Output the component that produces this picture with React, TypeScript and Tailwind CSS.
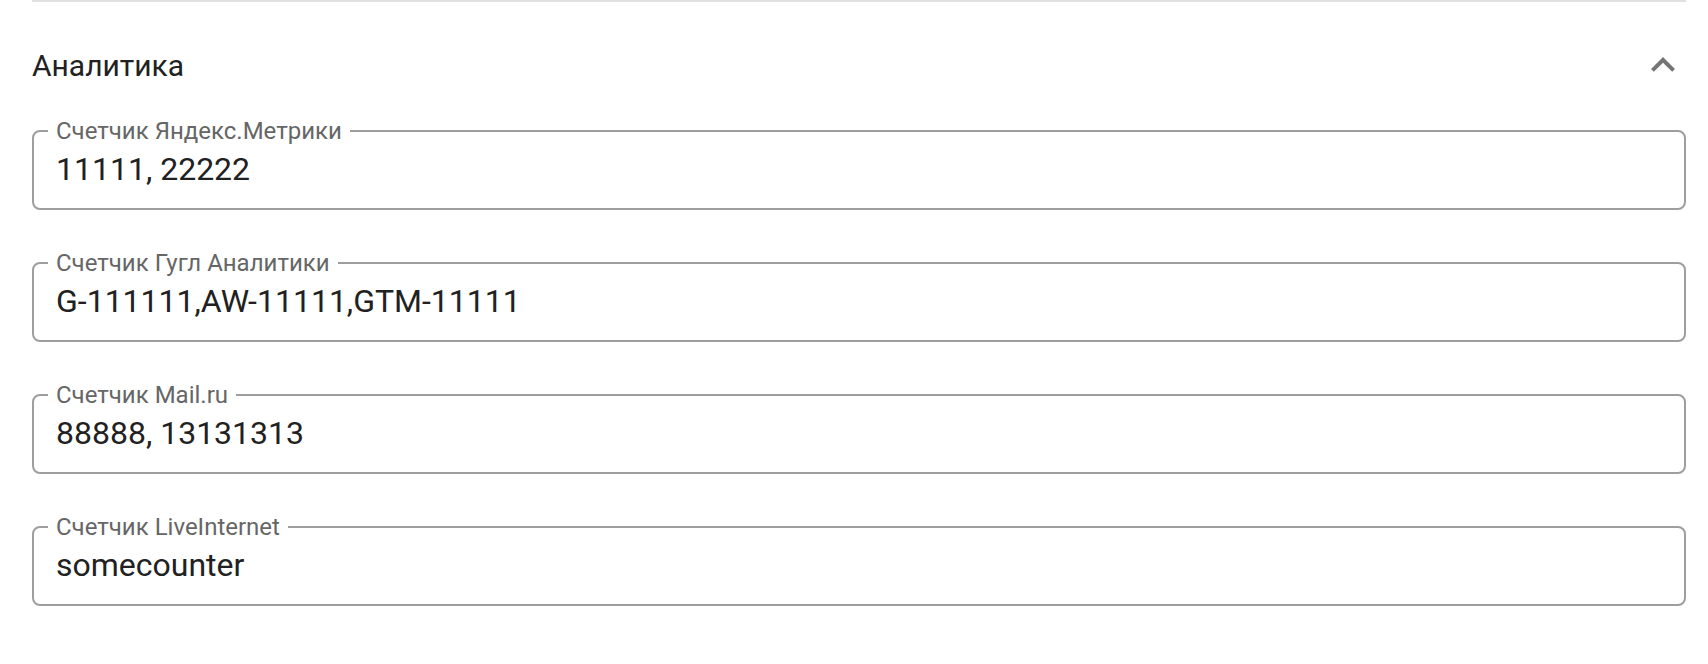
import React from "react";

type Counter = { label: string; value: string };

const counters: Counter[] = [
  { label: "Счетчик Яндекс.Метрики", value: "11111, 22222" },
  { label: "Счетчик Гугл Аналитики", value: "G-111111,AW-11111,GTM-11111" },
  { label: "Счетчик Mail.ru", value: "88888, 13131313" },
  { label: "Счетчик LiveInternet", value: "somecounter" },
];

function ExpandLess() {
  return (
    <svg viewBox="0 0 24 24" className="w-[48px] h-[48px] -mr-[1px] fill-[#757575]">
      <path d="M12 8l-6 6 1.41 1.41L12 10.83l4.59 4.58L18 14z" />
    </svg>
  );
}

function CounterField({ label, value }: Counter) {
  return (
    <fieldset className="border-2 border-[#9e9e9e] rounded-[8px] pl-[14px] pr-[14px] pb-[13px]">
      <legend className="px-[8px] text-[24px] leading-[24px] text-[#666666]">{label}</legend>
      <input
        readOnly
        value={value}
        className="block w-full h-[52px] bg-transparent outline-none text-[32px] text-[#212121] px-[8px]"
      />
    </fieldset>
  );
}

export default function App() {
  return (
    <div className="min-h-screen bg-white pl-8 pr-[22px] font-['Roboto','Liberation_Sans',sans-serif]">
      <div className="h-[2px] bg-[#e0e0e0]" />

      {/* Заголовок секции */}
      <div className="mt-[17px] h-[92px] flex items-center justify-between">
        <h2 className="text-[30px] text-[#212121] font-normal">Аналитика</h2>
        <ExpandLess />
      </div>

      {/* Поля счетчиков */}
      <div className="mt-[8px] flex flex-col gap-[41px]">
        {counters.map((c) => (
          <CounterField key={c.label} {...c} />
        ))}
      </div>
    </div>
  );
}
